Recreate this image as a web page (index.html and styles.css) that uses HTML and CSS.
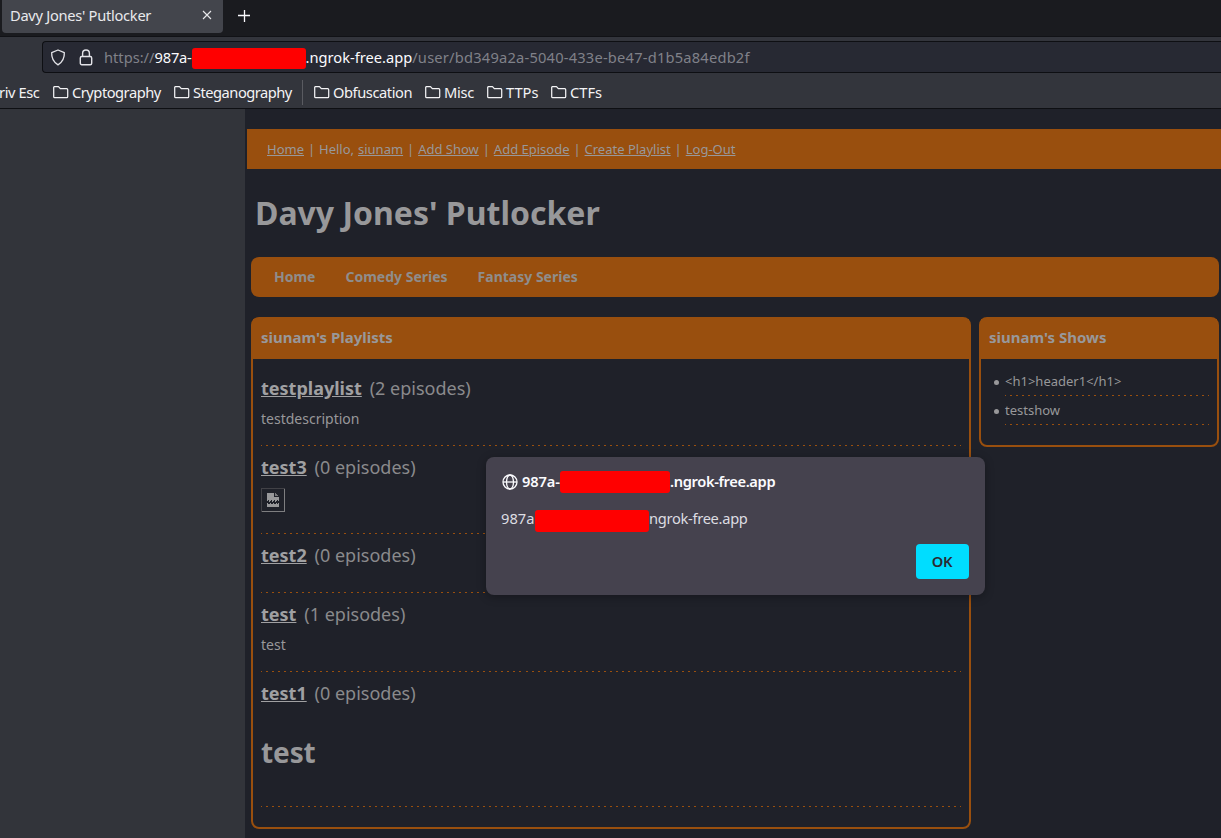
FILE: index.html
```html
<!DOCTYPE html>
<html lang="en">
<head>
<meta charset="utf-8">
<title>Davy Jones' Putlocker</title>
<link rel="stylesheet" href="styles.css">
</head>
<body>
<svg class="defs" width="0" height="0">
  <symbol id="folder" viewBox="0 0 16 14"><path d="M1.2 1.7h4.3l1.8 2h6.4q1 0 1 1v7q0 1-1 1H1.7q-1 0-1-1V2.2z" fill="none" stroke="currentColor" stroke-width="1.25" stroke-linejoin="round"/></symbol>
</svg>
<div class="tabs">
  <div class="tab"><span class="t-tab">Davy Jones' Putlocker</span>
    <svg class="close" width="10" height="10" viewBox="0 0 10 10"><path d="M1 1l8 8M9 1l-8 8" stroke="currentColor" stroke-width="1.1"/></svg>
  </div>
  <svg class="plus" width="12" height="12" viewBox="0 0 12 12"><path d="M6.5 0v12M0 5.5h12" stroke="currentColor" stroke-width="1.3"/></svg>
</div>
<div class="toolbar">
  <div class="urlbar">
    <svg class="shield" width="16" height="17" viewBox="0 0 16 17"><path d="M8 1L14.3 3.6Q14.8 11.5 8 15.9Q1.200 11.500 1.700 3.600Z" fill="none" stroke="currentColor" stroke-width="1.35" stroke-linejoin="round"/></svg>
    <svg class="lock" width="14" height="17" viewBox="0 0 14 17"><rect x="1.300" y="7.500" width="11.400" height="8.200" rx="1.500" fill="none" stroke="currentColor" stroke-width="1.400"/><path d="M3.600 7.500V4.400a3.400 3.400 0 0 1 6.800 0v3.100" fill="none" stroke="currentColor" stroke-width="1.400"/></svg>
    <span class="url-scheme">https://</span><span class="url-sub">987a-</span><span class="redact r-url"></span><span class="url-domain">.ngrok-free.app</span><span class="url-path">/user/bd349a2a-5040-433e-be47-d1b5a84edb2f</span>
  </div>
  <div class="bookmarks">
    <span class="bm cut"><span>riv Esc</span></span>
    <span class="bm crypt"><svg width="16" height="14"><use href="#folder"/></svg><span>Cryptography</span></span>
    <span class="bm steg"><svg width="16" height="14"><use href="#folder"/></svg><span>Steganography</span></span>
    <i class="sep"></i>
    <span class="bm obf"><svg width="16" height="14"><use href="#folder"/></svg><span>Obfuscation</span></span>
    <span class="bm misc"><svg width="16" height="14"><use href="#folder"/></svg><span>Misc</span></span>
    <span class="bm ttps"><svg width="16" height="14"><use href="#folder"/></svg><span>TTPs</span></span>
    <span class="bm ctfs"><svg width="16" height="14"><use href="#folder"/></svg><span>CTFs</span></span>
  </div>
</div>
<div class="view">
  <div class="sidebar"></div>
  <div class="page">
    <div class="userbar"><a>Home</a> | Hello, <a>siunam</a> | <a>Add Show</a> | <a>Add Episode</a> | <a>Create Playlist</a> | <a>Log-Out</a></div>
    <h1 class="title">Davy Jones' Putlocker</h1>
    <nav class="nav"><b>Home</b><b>Comedy Series</b><b>Fantasy Series</b></nav>
    <div class="cols">
      <section class="card lists">
        <h2 class="head">siunam's Playlists</h2>
        <div class="item first"><p class="name"><a>testplaylist</a> <span>(2 episodes)</span></p><p class="desc">testdescription</p></div>
        <div class="item second"><p class="name"><a>test3</a> <span>(0 episodes)</span></p>
          <svg class="broken" width="24" height="24" viewBox="0 0 24 24" shape-rendering="crispEdges"><path d="M.5 24V.5H24" fill="none" stroke="#414146"/><path d="M23.500 .5v23H.5" fill="none" stroke="#7e7e80"/><path d="M6 5h7v4h5v4h-1v-1h-1v1h-1v1h-1v-2h-1v1h-1v1h-1v-2h-1v1H9v1H8v-2H7v1H6z" fill="#98989a"/><path d="M14 5h1v1h1v1h1v1h-3z" fill="#77777a"/><path d="M6 15h1v1h2v-1h1v1h2v-1h1v1h2v-1h1v1h1v-1h1v4H6z" fill="#98989a"/></svg></div>
        <div class="item third"><p class="name"><a>test2</a> <span>(0 episodes)</span></p></div>
        <div class="item fourth"><p class="name"><a>test</a> <span>(1 episodes)</span></p><p class="desc">test</p></div>
        <div class="item fifth"><p class="name"><a>test1</a> <span>(0 episodes)</span></p><h1 class="big">test</h1></div>
      </section>
      <section class="card shows">
        <h2 class="head">siunam's Shows</h2>
        <ul class="show-list"><li>&lt;h1&gt;header1&lt;/h1&gt;</li><li>testshow</li></ul>
      </section>
    </div>
  </div>
</div>
<div class="dialog">
  <div class="origin">
    <svg width="16" height="16" viewBox="0 0 16 16" fill="none" stroke="currentColor" stroke-width="1.300"><circle cx="8" cy="8" r="7"/><ellipse cx="8" cy="8" rx="3.500" ry="7"/><path d="M1 8h14"/></svg>
    <span class="o-sub">987a-</span><span class="redact r-origin"></span><span class="o-domain">.ngrok-free.app</span>
  </div>
  <div class="message"><span class="m-sub">987a</span><span class="redact r-msg"></span><span class="m-domain">ngrok-free.app</span></div>
  <button class="ok">OK</button>
</div>
</body>
</html>
```
FILE: styles.css
```css
* { box-sizing: border-box; }
body { margin: 0; width: 1221px; height: 838px; overflow: hidden; position: relative; background: #1f2129; color: #98989a; font: 13px "Noto Sans", sans-serif; display: flex; flex-direction: column; }
p, h1, h2, ul { margin: 0; padding: 0; }
svg { flex: none; display: block; }
.defs { position: absolute; }
.tabs { height: 37px; flex: none; background: #1a1b1f; border-bottom: 1px solid #111216; display: flex; color: #fbfbfe; }
.tab { width: 221px; height: 33px; margin-left: 2px; background: #43454c; border-radius: 0 0 4px 4px; display: flex; align-items: center; justify-content: space-between; padding: 0 11px 3px 8px; font-size: 14.67px; letter-spacing: -.28px; white-space: nowrap; color: #e9e9ec; }
.plus { margin: 10px 0 0 15px; }
.toolbar { height: 72px; flex: none; background: #33353c; border-bottom: 1px solid #0e0f13; padding-top: 4px; }
.urlbar { margin-left: 42px; height: 32px; background: #272933; border: 1px solid #0e0f13; border-right: 0; border-radius: 4px 0 0 4px; display: flex; align-items: center; font-size: 14.67px; white-space: nowrap; color: #fbfbfe; padding-left: 7px; }
.shield, .lock { color: #e3e3e8; }
.lock { margin: 0 11px 0 13px; }
.url-scheme, .url-path { color: #808189; }
.url-sub { width: 37px; letter-spacing: -.2px; }
.url-path { letter-spacing: .21px; }
.redact { background: #f00; border-radius: 3px; flex: none; height: 21px; }
.r-url { width: 114px; margin-top: 2px; }
.bookmarks { display: flex; height: 35px; align-items: center; padding-top: 3px; font-size: 14.67px; color: #f3f3f5; white-space: nowrap; }
.bm { display: flex; align-items: center; gap: 3px; height: 22px; }
.cut { width: 53px; letter-spacing: -.4px; }
.cut span { margin-left: -1px; }
.crypt { width: 121px; letter-spacing: -.48px; }
.steg { width: 128px; letter-spacing: -.5px; }
.sep { width: 1px; height: 25px; background: #5a5b61; margin-right: 11px; }
.obf { width: 111px; letter-spacing: -.43px; }
.misc { width: 62px; letter-spacing: -.3px; }
.ttps { width: 64px; }
.view { display: flex; height: 729px; }
.sidebar { width: 245px; background: #32343a; flex: none; }
.page { flex: 1; padding: 20px 0 0 2px; }
.userbar { background: #994f0e; height: 40px; line-height: 40px; padding-left: 20px; white-space: nowrap; color: #98989a; word-spacing: .55px; }
.userbar a { word-spacing: 0; }
a { text-decoration: underline; }
.title { font-size: 32px; line-height: 44px; margin: 22px 0 0 8px; white-space: nowrap; }
.nav { height: 40px; margin: 22px 2px 0 4px; background: #994f0e; border-radius: 8px; padding: 0 0 2px 23px; display: flex; align-items: center; gap: 30px; font-size: 14px; color: #8f8d8c; }
.cols { display: flex; align-items: flex-start; gap: 8px; margin: 20px 2px 0 4px; }
.card { border: 2px solid #994f0e; border-radius: 8px; flex: none; }
.lists { width: 720px; height: 512px; }
.shows { width: 240px; height: 130px; }
.head { font-size: 15px; line-height: 36px; height: 40px; background: #994f0e; padding-left: 8px; }
.item, .show-list li { --period: calc(100% / 34); background: repeating-linear-gradient(90deg, #994f0e 0 1px, transparent 1px calc(var(--period) - 1px), #994f0e calc(var(--period) - 1px) var(--period)) left bottom / 100% 1px no-repeat; }
.item { --period: calc(100% / 116); margin: 0 8px; padding-top: 8px; }
.first { height: 79px; margin-top: 8px; }
.second { height: 88px; }
.third { height: 59px; }
.fourth { height: 79px; }
.fifth { height: 135px; }
.name { font-size: 18px; line-height: 26px; height: 26px; }
.name a { font-weight: bold; margin-right: 3.2px; color: #a0a0a2; }
.name span { color: #8a8a8c; }
.desc { font-size: 14px; line-height: 20px; margin-top: 8px; }
.broken { margin-top: 8px; }
.big { font-size: 28px; line-height: 38px; margin-top: 27px; letter-spacing: -.1px; }
.show-list { margin: 8px 8px 0 12px; list-style: none; }
.show-list li { height: 29px; line-height: 29px; margin-left: 12px; display: flex; align-items: center; }
.show-list li::before { content: ""; width: 5px; height: 5px; border-radius: 50%; background: #98989a; margin: 1px 6px 0 -11px; flex: none; }
.dialog { position: absolute; left: 486px; top: 457px; width: 499px; height: 138px; background: #45424e; border-radius: 8px; box-shadow: 0 2px 10px rgba(0,0,0,.3); color: #fbfbfe; font-size: 14.67px; padding: 14px 16px; white-space: nowrap; display: flex; flex-direction: column; }
.origin { display: flex; align-items: center; height: 22px; font-weight: 600; }
.origin svg { margin-right: 4px; }
.o-sub { width: 38px; letter-spacing: -.1px; margin-top: -2px; }
.o-domain { letter-spacing: -.36px; margin-top: -2px; }
.r-origin { width: 110px; height: 22px; }
.message { display: flex; align-items: center; height: 22px; margin: 16px 0 0 -1px; color: #dddde2; }
.m-sub { width: 34px; margin-top: -5px; }
.m-domain { letter-spacing: -.3px; margin-top: -5px; }
.r-msg { width: 114px; height: 22px; margin-top: 1px; }
.ok { align-self: flex-end; width: 53px; height: 35px; margin-top: 13px; padding: 0 1px 2px 0; border: 0; border-radius: 4px; background: #00ddff; color: #2b2a33; font: 600 14.67px "Noto Sans", sans-serif; letter-spacing: -.2px; }
```
